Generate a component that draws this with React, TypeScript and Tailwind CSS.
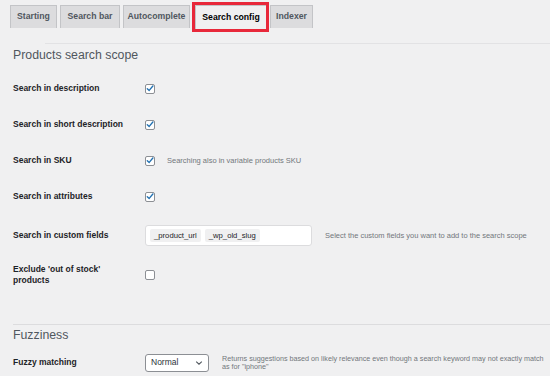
import React from "react";

function Check({ checked }: { checked: boolean }) {
  return (
    <div className="w-[10px] h-[10px] shrink-0 rounded-[2px] border border-[#8c8f94] bg-white flex items-center justify-center">
      {checked && (
        <svg width="9" height="9" viewBox="0 0 10 10">
          <path d="M1.6 5.2 L4 7.4 L8.6 1.9" fill="none" stroke="#2271b1" strokeWidth="1.7" strokeLinecap="round" strokeLinejoin="round" />
        </svg>
      )}
    </div>
  );
}

function Row({ label, h = "h-[36px]", children }: { label: React.ReactNode; h?: string; children?: React.ReactNode }) {
  return (
    <div className={`flex items-center ${h}`}>
      <div className="w-[132px] shrink-0 text-[8.5px] leading-[10.7px] font-bold text-[#1d2327]">{label}</div>
      {children}
    </div>
  );
}

export default function App() {
  const tabs = [
    { t: "Starting", w: "w-[47px]", ml: "ml-0" },
    { t: "Search bar", w: "w-[60px]", ml: "ml-[3px]" },
    { t: "Autocomplete", w: "w-[67px]", ml: "ml-[3px]" },
  ];
  return (
    <div className="w-[550px] h-[376px] overflow-hidden bg-[#f0f0f1] font-['Liberation_Sans',Arial,sans-serif]">
      <div className="flex items-start pl-[10px] pt-[5px]">
        {tabs.map((x) => (
          <div
            key={x.t}
            className={`${x.w} ${x.ml} h-[23px] flex items-center justify-center bg-[#dcdcde] border border-[#c3c4c7] border-b-0 text-[8.7px] font-bold text-[#50575e]`}
          >
            {x.t}
          </div>
        ))}
        <div className="relative ml-[5px] w-[72px] h-[24px]">
          <div className="w-full h-full flex items-center justify-center bg-[#f0f0f1] border border-[#c3c4c7] border-b-0 text-[8.7px] font-bold text-[#000]">
            Search config
          </div>
          <div className="absolute -left-[3px] -right-[2px] -top-[3px] -bottom-[3px] border-[3px] border-[#e8283a]" />
        </div>
        <div className="ml-[3px] w-[43px] h-[23px] flex items-center justify-center bg-[#dcdcde] border border-[#c3c4c7] border-b-0 text-[8.7px] font-bold text-[#50575e]">
          Indexer
        </div>
      </div>
      <div className="mt-[14px] ml-[45px] h-px bg-[#e2e2e4]" />

      <div className="pl-[13px]">
        <div className="h-[22px] flex items-center text-[12.3px] text-[#50575e]">Products search scope</div>
        <div className="h-[4.7px]" />
        <Row label="Search in description">
          <Check checked />
        </Row>
        <Row label="Search in short description">
          <Check checked />
        </Row>
        <Row label="Search in SKU">
          <Check checked />
          <span className="ml-[12px] text-[7.5px] text-[#72777c] whitespace-nowrap">Searching also in variable products SKU</span>
        </Row>
        <Row label="Search in attributes">
          <Check checked />
        </Row>
        <Row label="Search in custom fields" h="h-[42px]">
          <div className="w-[167px] h-[21px] shrink-0 bg-white border border-[#dcdcde] rounded-[3px] flex items-center pl-[4px] gap-[4px]">
            <span className="h-[13px] px-[4px] flex items-center bg-[#f0f0f1] rounded-[2px] text-[7.7px] text-[#1d2327]">_product_url</span>
            <span className="h-[13px] px-[4px] flex items-center bg-[#f0f0f1] rounded-[2px] text-[7.7px] text-[#1d2327]">_wp_old_slug</span>
          </div>
          <span className="ml-[13px] text-[7.5px] text-[#72777c] whitespace-nowrap">Select the custom fields you want to add to the search scope</span>
        </Row>
        <Row label={<>Exclude 'out of stock'<br />products</>}>
          <Check checked={false} />
        </Row>
      </div>

      <div className="mt-[31px] ml-[13px] h-px bg-[#dcdcde]" />

      <div className="pl-[13px]">
        <div className="h-[22px] flex items-center text-[12.3px] text-[#50575e]">Fuzziness</div>
        <Row label="Fuzzy matching" h="h-[32px]">
          <div className="w-[64px] h-[18px] shrink-0 bg-white border border-[#8c8f94] rounded-[3px] flex items-center justify-between pl-[5px] pr-[5px]">
            <span className="text-[8.5px] text-[#2c3338]">Normal</span>
            <svg width="8" height="6" viewBox="0 0 8 6">
              <path d="M1.2 1.6 L4 4.2 L6.8 1.6" fill="none" stroke="#50575e" strokeWidth="1.1" />
            </svg>
          </div>
          <div className="ml-[13px] min-w-0 flex-1 overflow-hidden flex flex-col text-[7.2px] leading-[8px] text-[#72777c] whitespace-nowrap">
            <span>Returns suggestions based on likely relevance even though a search keyword may not exactly match</span>
            <span>as for "iphone"</span>
          </div>
        </Row>
      </div>
    </div>
  );
}
